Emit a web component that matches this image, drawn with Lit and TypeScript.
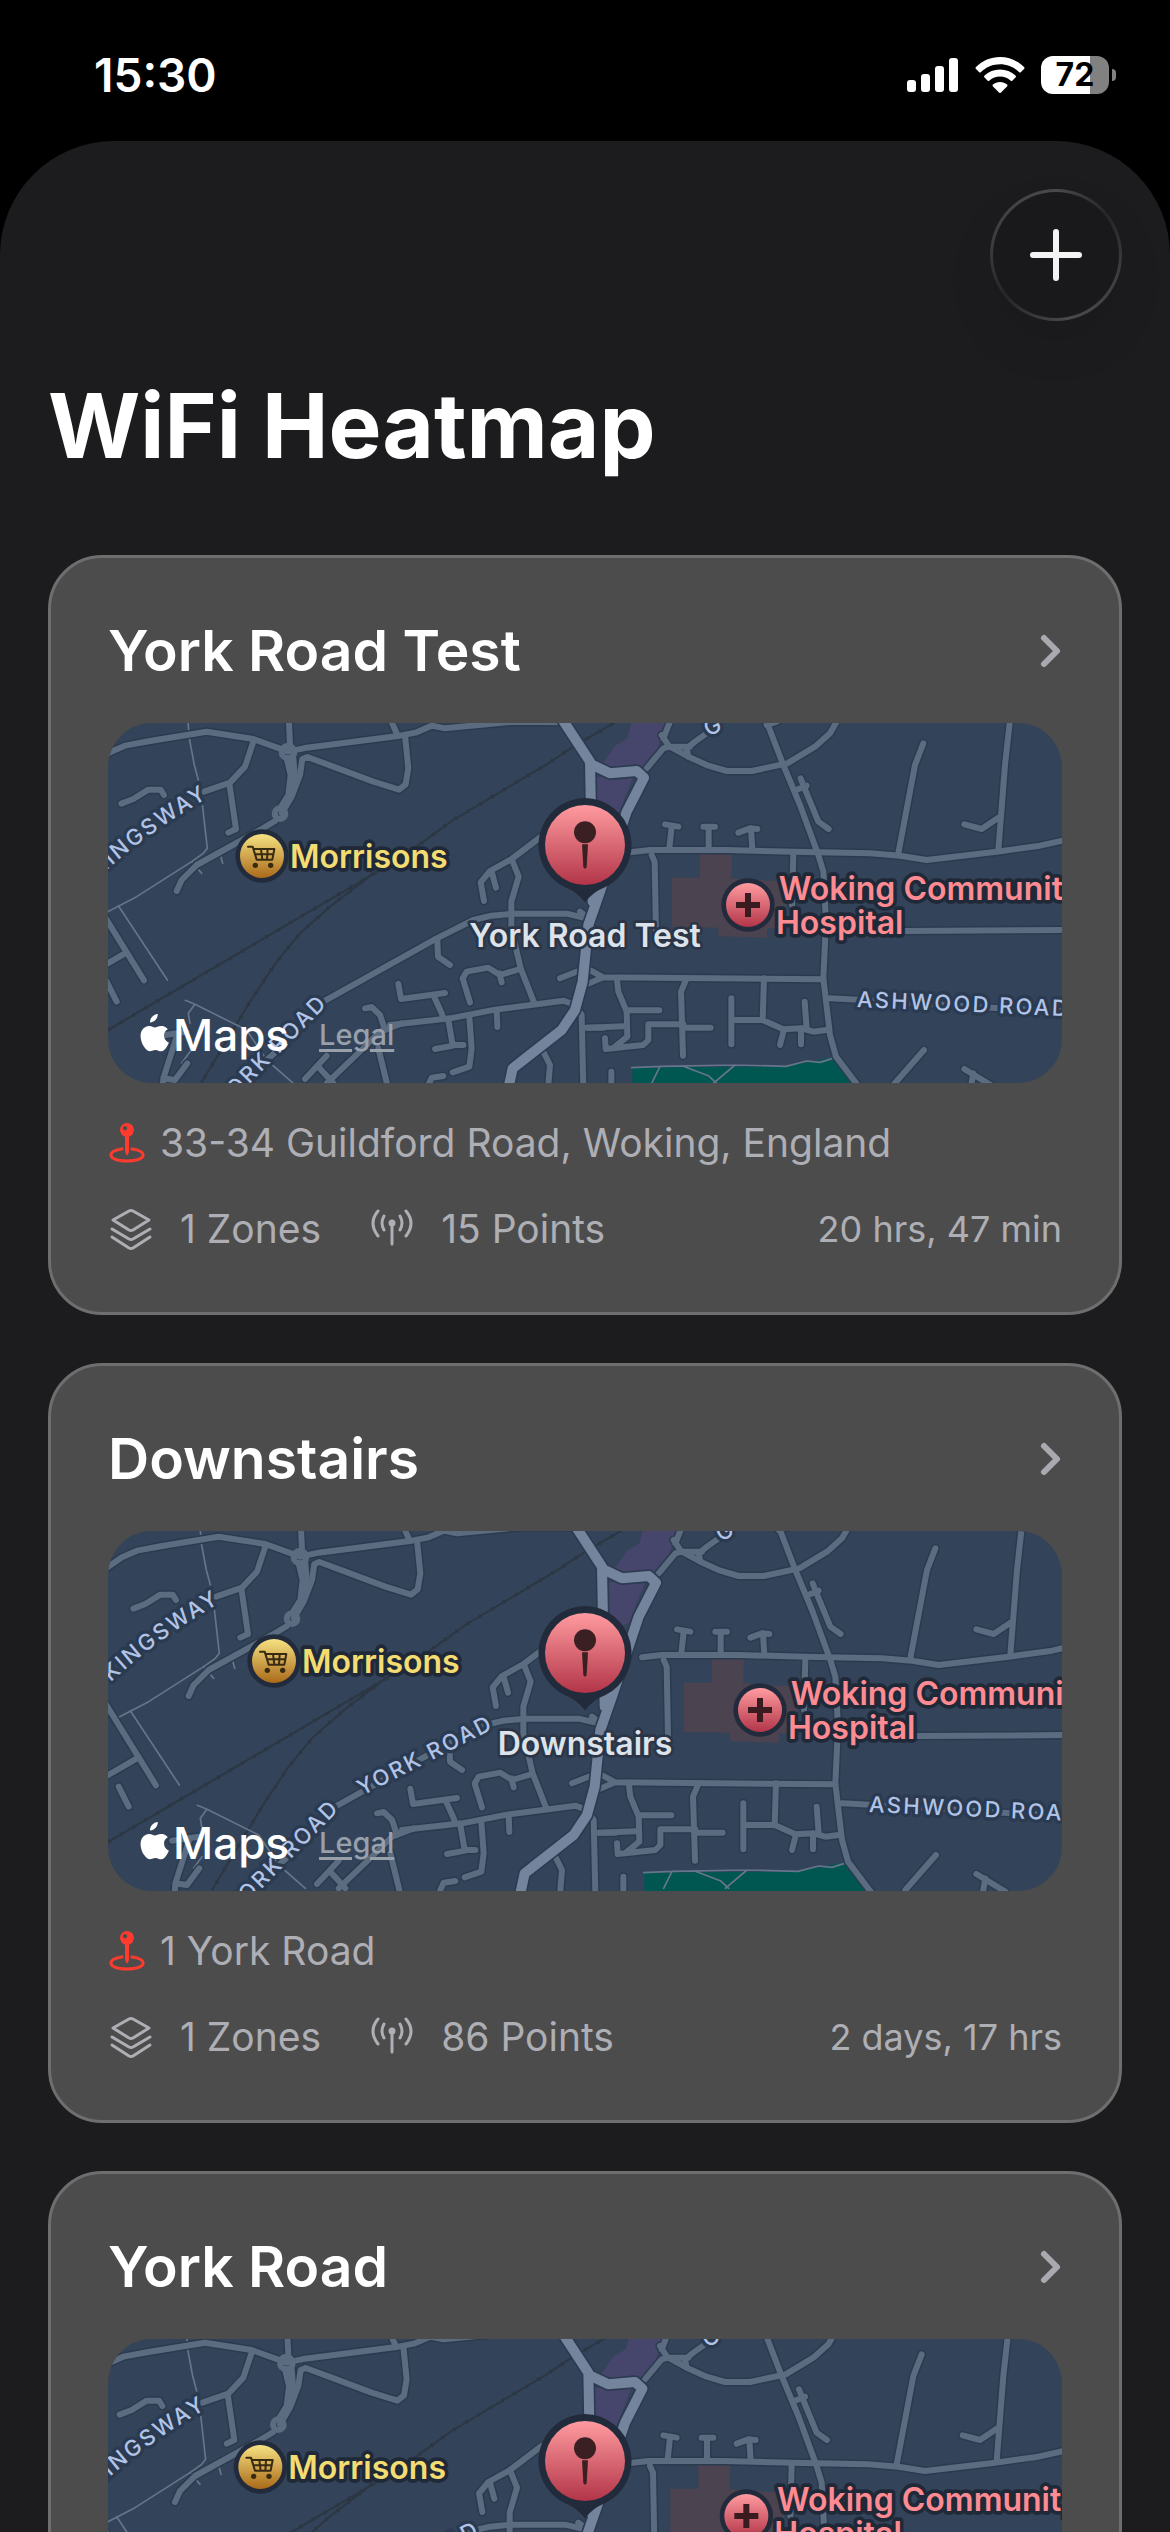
import { LitElement, html, svg, css } from "lit";
import { customElement, property } from "lit/decorators.js";

interface Survey {
  id: string;
  name: string;
  address: string;
  zones: number;
  points: number;
  age: string;
  dx: number;
  dy: number;
  streetLabel: boolean;
}

const SURVEYS: Survey[] = [
  { id: "s1", name: "York Road Test", address: "33-34 Guildford Road, Woking, England", zones: 1, points: 15, age: "20 hrs, 47 min", dx: 0, dy: 0, streetLabel: false },
  { id: "s2", name: "Downstairs", address: "1 York Road", zones: 1, points: 86, age: "2 days, 17 hrs", dx: 36, dy: -9, streetLabel: true },
  { id: "s3", name: "York Road", address: "1 York Road", zones: 1, points: 42, age: "3 days, 2 hrs", dx: -5, dy: -15, streetLabel: true },
];

/* Local streets, drawn thin over a darker casing. */
const STREETS = [
  "M-40 160 L30 112 L75 92 L150 78 L320 50 L460 72 L565 110 L620 98 L900 62 L950 52 L995 32 L1035 40 L1240 20 L1390 22",
  "M565 -20 L570 90 M870 10 L890 55 M915 62 L925 160 L917 208 L897 224 L820 200 L700 155 L622 126 L607 132 L600 180 L575 245 L545 295",
  "M560 130 L572 180 L565 240 L540 280 M580 130 L585 190 L570 245",
  "M460 80 L435 155 L390 203 L312 230 M388 205 L408 342 L385 353",
  "M64 266 L100 252 L145 224 L182 224 L192 240",
  "M525 318 L480 345 L290 450 L245 495 L230 528",
  "M-20 550 L132 796 M75 715 L-20 770 M20 800 L50 860",
  "M670 860 L1010 670 L1120 615 L1175 602 L1240 596 L1400 596 L1460 610",
  "M1330 360 L1235 432 L1170 468 L1142 502 L1152 558 M1175 470 L1188 518 M1235 432 L1256 485 L1234 560 L1234 640 L1262 760 L1302 862",
  "M1012 675 L1014 725 L1050 750 M1110 862 L1088 790 L1100 770 L1165 758 L1200 780 L1260 762 M1198 775 L1205 802",
  "M895 806 L903 852 L1035 834 M1000 840 L1025 895 L1030 910 M870 930 L1050 910 L1185 884 L1390 857 L1425 870 L1445 900 L1450 1120",
  "M795 880 L815 876 L840 900 L855 945 M1045 915 L1058 990 L1090 990 M1060 992 L1005 1002 M1108 905 L1115 1000 L1108 1055 L1058 1072 M1190 885 L1192 936",
  "M905 925 L840 950 L800 990 L680 1105 M680 1022 L615 1092 M655 1055 L700 1105 M835 1000 L862 1110 M985 1110 L995 1088 L1030 1083",
  "M230 965 L190 1090 L225 1095 L262 1045 M190 1090 L188 1120 M180 962 L260 950 M1325 1000 L1350 1050 L1345 1110 M1460 938 L1510 938",
  "M500 1035 L540 1000",
];

const STREETS_EAST = [
  "M150 412 L210 405 L440 405 L640 410 L870 415 L960 422 L1040 435 L1250 410 L1380 392 L1470 372",
  "M215 420 L224 440 L228 650 M255 328 L295 335 M275 335 L268 400 M370 335 L405 335 M386 335 L386 400 M475 353 L510 340 L532 342 M513 340 L517 405",
  "M560 20 L610 150 L660 270 L715 420 L730 470 L738 620 L730 790 L750 960 L768 1025 L840 1120",
  "M770 20 L750 55 L705 95 L622 145 L515 168 L440 168 L385 152 L325 125 L270 95 L250 100 L200 160 M245 60 L268 95 M270 20 L250 70 M560 30 L590 20",
  "M325 125 L320 100 L345 80 L380 55 M270 95 L330 95",
  "M662 190 L680 235 L715 320 L746 342 M648 225 L680 212",
  "M1030 85 L1005 150 L955 415 M1290 15 L1275 150 L1255 405 M1153 328 L1205 342 L1255 308",
  "M640 415 L636 570 M-60 790 L-10 770 M970 648 L1470 645 M750 850 L850 855 L1260 880 L1500 890",
  "M0 590 L20 605 M15 810 L70 787 L730 793 M70 787 L20 760 M110 787 L115 830 L140 890 L142 965 L105 995 M75 970 L77 1002 L190 990 L205 975 L205 928 L310 928 M140 886 L238 886 M22 938 L130 934",
  "M320 790 L303 830 L309 1022 M310 938 L392 938 M454 850 L454 988 M552 790 L548 914 M454 915 L548 915 L610 943 L665 940 L700 950 L745 944 M612 943 L600 990 M663 940 L663 988 M674 860 L680 940",
  "M94 1070 L94 1120 M1032 1005 L940 1110 M1153 1062 L1240 1115 M1180 1075 L1172 1120",
];

/* Main roads. */
const ARTERIES = [
  "M1385 10 L1470 140 L1478 560 M1478 150 L1530 175 L1610 168 L1632 188 L1580 290 L1500 530 L1465 630 L1448 800 L1425 885 L1385 945 L1270 1035 L1238 1060 L1225 1120",
];

const FOOTPATHS = [
  "M264 20 L268 70 L283 150 L295 195 M305 250 L322 400 L310 415 L275 440 L110 545 L20 592 M55 572 L202 795 M275 440 L305 475 M360 415 L368 445",
  "M256 856 L285 868 L440 945 L500 1035 L580 1105 M283 870 L265 895 L270 925 M270 1010 L245 1045",
  "M1595 1058 L1680 1054 L1905 1050 L2058 1054 L2120 1038 L2160 1042 L2205 1028 M1680 1054 L1655 1105 M1750 1054 L1825 1082 L1850 1105 M1905 1050 L1840 1105",
];

const RAILWAYS = [
  "M-10 965 L900 430 L1060 315 L1340 148 L1420 95 L1600 -10",
  "M820 475 L690 575 L600 655 L530 740 L450 860 L300 1110",
];

@customElement("survey-map")
export class SurveyMap extends LitElement {
  @property({ attribute: false }) survey!: Survey;

  static styles = css`
    :host { display: block; }
    .frame {
      position: relative;
      height: 360px;
      border-radius: 44px;
      overflow: hidden;
      background: #334359;
    }
    .canvas { display: block; width: 100%; height: 100%; }
    .casing, .street, .artery, .artery-casing, .path, .rail, .ties { fill: none; stroke-linecap: round; stroke-linejoin: round; }
    .casing { stroke: #2b3b4f; stroke-width: 27px; }
    .street { stroke: #5b6b80; stroke-width: 18px; }
    .artery-casing { stroke: #2c3b51; stroke-width: 40px; }
    .artery { stroke: #73849c; stroke-width: 30px; }
    .path { stroke: #67758a; stroke-width: 5px; }
    .rail { stroke: #2d3743; stroke-width: 6px; }
    .ties { stroke: #2d3743; stroke-width: 12px; stroke-linecap: butt; stroke-dasharray: 6 36; }
    .park { fill: #005752; }
    .plaza { fill: #46456b; }
    .clinic { fill: #4b4350; }
    .ring { fill: #222b3b; }
    .glyph { fill: #3a2022; }
    .bar { stroke: #3a1b20; stroke-width: 18px; }
    .cart { fill: none; stroke: #392b12; stroke-width: 6px; stroke-linejoin: round; stroke-linecap: round; }
    .wheel { fill: #392b12; }
    .label { font-family: Inter, "Liberation Sans", sans-serif; font-weight: 600; font-size: 96px; paint-order: stroke; stroke-linejoin: round; }
    .shop { fill: #f3dc72; stroke: #1f2938; stroke-width: 22px; }
    .hospital { fill: #ff8b92; stroke: #1f2938; stroke-width: 22px; }
    .place { fill: #dce3ea; stroke: #2b3547; stroke-width: 16px; text-anchor: middle; }
    .road { fill: #b1c3e6; stroke: #2a3a50; stroke-width: 20px; font-weight: 500; font-size: 66px; letter-spacing: 7px; }
    .trailing { text-anchor: end; }
    .attribution {
      position: absolute;
      left: 31px;
      bottom: 20px;
      display: flex;
      align-items: center;
      color: #fff;
      font-family: Inter, "Liberation Sans", sans-serif;
    }
    .apple { width: 30px; height: 38px; margin-bottom: 4px; fill: #fff; }
    .maps { font-size: 44px; line-height: 56px; margin-left: 4px; font-weight: 500; }
    .legal { margin-left: 30px; font-size: 29px; line-height: 40px; font-weight: 500; color: #98a0ab; text-underline-offset: 4px; text-decoration-thickness: 3px; }
  `;

  render() {
    const { name, dx, dy, streetLabel, id } = this.survey;
    return html`
      <div class="frame">
        <svg class="canvas" viewBox="24 24 2862 1080" preserveAspectRatio="xMidYMid slice" role="img" aria-label=${`Map of ${name}`}>
          <defs>
            <linearGradient id="red" x1="0" y1="0" x2="0" y2="1">
              <stop offset="0" stop-color="#ff9ba0"></stop>
              <stop offset="1" stop-color="#b23548"></stop>
            </linearGradient>
            <linearGradient id="gold" x1="0" y1="0" x2="0" y2="1">
              <stop offset="0" stop-color="#f6e282"></stop>
              <stop offset="1" stop-color="#aa6a19"></stop>
            </linearGradient>
            <path id="kingsway" d="M-180 640 L40 448 Q150 350 328 246"></path>
            <path id="york-low" d="M240 1320 L500 1054 L686 866"></path>
            <path id="york-high" d="M750 828 L1180 608"></path>
          </defs>
          <g transform="translate(${dx} ${dy})">
            <path class="plaza" d="M1600 0 L1582 70 L1545 92 L1505 150 L1560 175 L1620 165 L1670 110 L1705 0 Z M1490 185 L1600 185 L1550 310 L1520 320 L1490 290 Z"></path>
            <path class="clinic" d="M1800 414 L1896 418 L1894 490 L2058 500 L2058 640 L2002 640 L2000 668 L1856 664 L1854 638 L1716 636 L1716 488 L1800 488 Z"></path>
            <path class="park" d="M1597 1058 L2058 1054 L2205 1026 L2290 1130 L1597 1130 Z"></path>
            ${RAILWAYS.map((d) => svg`<path class="rail" d=${d}></path><path class="ties" d=${d}></path>`)}
            ${FOOTPATHS.map((d) => svg`<path class="path" d=${d}></path>`)}
            ${STREETS.map((d) => svg`<path class="casing" d=${d}></path>`)}
            <g transform="translate(1440 0)">${STREETS_EAST.map((d) => svg`<path class="casing" d=${d}></path>`)}</g>
            ${STREETS.map((d) => svg`<path class="street" d=${d}></path>`)}
            <g transform="translate(1440 0)">${STREETS_EAST.map((d) => svg`<path class="street" d=${d}></path>`)}</g>
            ${ARTERIES.map((d) => svg`<path class="artery-casing" d=${d}></path>`)}
            ${ARTERIES.map((d) => svg`<path class="artery" d=${d}></path>`)}
            <circle class="street" cx="564" cy="111" r="19"></circle>
            <circle class="street" cx="540" cy="296" r="16"></circle>
            <text class="label road trailing"><textPath href="#kingsway" startOffset="100%">KINGSWAY</textPath></text>
            <text class="label road trailing"><textPath href="#york-low" startOffset="100%">YORK ROAD</textPath></text>
            ${streetLabel ? svg`<text class="label road"><textPath href="#york-high">YORK ROAD</textPath></text>` : null}
            <text class="label road" transform="translate(2270 876) rotate(2.5)">ASHWOOD ROAD</text>
            <text class="label road" transform="translate(1826 66) rotate(-28)">G</text>
            <circle class="ring" cx="486" cy="423" r="80"></circle>
            <circle cx="486" cy="423" r="66" fill="url(#gold)"></circle>
            <path class="cart" d="M444 395 L458 395 L470 434 L517 434 L523 402 L461 402 M465 418 L520 418 M483 402 L487 434 M503 402 L501 434"></path>
            <circle class="wheel" cx="466" cy="451" r="8"></circle>
            <circle class="wheel" cx="512" cy="451" r="8"></circle>
            <text class="label shop" x="570" y="460">Morrisons</text>
            <circle class="ring" cx="1944" cy="570" r="80"></circle>
            <circle cx="1944" cy="570" r="66" fill="url(#red)"></circle>
            <path class="bar" d="M1908 570 H1980 M1944 534 V606"></path>
            <text class="label hospital" x="2036" y="555">Woking Community</text>
            <text class="label hospital" x="2028" y="656">Hospital</text>
          </g>
          <path class="ring" d="M1455 249 a141 141 0 0 1 60 268 Q1480 530 1455 562 Q1430 530 1395 517 a141 141 0 0 1 60 -268 Z"></path>
          <circle cx="1455" cy="390" r="120" fill="url(#red)"></circle>
          <circle class="glyph" cx="1455" cy="352" r="33"></circle>
          <path class="glyph" d="M1446 388 H1464 L1460 456 Q1455 466 1450 456 Z"></path>
          <text class="label place" x="1455" y="697">${name}</text>
        </svg>
        <div class="attribution">
          <svg class="apple" viewBox="4 1 26 34" preserveAspectRatio="none" aria-hidden="true">
            <path d="M20.3 1c.2 3.700-3 7.600-6.700 7.500C13.200 4.900 16.600 1.200 20.300 1ZM25.700 20.200c0-3.700 3-5.400 3.200-5.500-1.800-2.600-4.500-3-5.500-3-2.300-.200-4.500 1.400-5.700 1.400s-3-1.400-4.900-1.300c-2.500 0-4.900 1.500-6.200 3.700-2.600 4.600-.700 11.400 1.900 15.100 1.300 1.800 2.800 3.900 4.800 3.800 1.900-.1 2.600-1.200 4.900-1.200s3 1.200 5 1.200c2.100 0 3.400-1.900 4.600-3.700 1.500-2.100 2.100-4.100 2.100-4.200-.1-.1-4.200-1.600-4.200-6.300Z"></path>
          </svg>
          <span class="maps">Maps</span>
          <a class="legal" href="#legal-${id}">Legal</a>
        </div>
      </div>
    `;
  }
}

@customElement("survey-card")
export class SurveyCard extends LitElement {
  @property({ attribute: false }) survey!: Survey;

  static styles = css`
    :host { display: block; }
    .card {
      box-sizing: border-box;
      padding: 57px 57px 59px;
      border: 3px solid #6e6e6f;
      border-radius: 54px;
      background: #4c4c4c;
      color: #aeaeb5;
      font-family: Inter, "Liberation Sans", sans-serif;
    }
    .head { display: flex; align-items: center; justify-content: space-between; height: 72px; margin-bottom: 36px; color: inherit; text-decoration: none; }
    .name { margin: 0; color: #fff; font-size: 57px; line-height: 72px; font-weight: 600; }
    .chevron { width: 24px; height: 38px; fill: none; stroke: #a9a9b0; stroke-width: 6px; stroke-linecap: round; stroke-linejoin: round; }
    .address { display: flex; align-items: center; gap: 14px; margin-top: 36px; font-size: 39px; line-height: 48px; }
    .pin { width: 38px; height: 42px; }
    .meta { display: flex; align-items: center; margin-top: 38px; font-size: 39px; line-height: 48px; }
    .stat { display: flex; align-items: center; gap: 26px; margin-right: 48px; }
    .age { margin-left: auto; font-size: 36px; }
    .line { fill: none; stroke: #aeaeb5; stroke-width: 3px; stroke-linecap: round; stroke-linejoin: round; }
    .dot { fill: #aeaeb5; }
    .layers { width: 46px; height: 46px; }
    .antenna { width: 46px; height: 42px; }
  `;

  render() {
    const s = this.survey;
    return html`
      <article class="card">
        <a class="head" href="#${s.id}">
          <h2 class="name">${s.name}</h2>
          <svg class="chevron" viewBox="0 0 24 38" aria-hidden="true"><path d="M6 6 L19 19 L6 32"></path></svg>
        </a>
        <survey-map .survey=${s}></survey-map>
        <div class="address">
          <svg class="pin" viewBox="0 0 38 42" aria-hidden="true">
            <path fill="none" stroke="#ff3b30" stroke-width="3" stroke-linecap="round" d="M14 27 C-1 29 0 37 12 38.500 Q19 39.500 26 38.500 C38 37 39 29 24 27"></path>
            <path fill="#ff3b30" fill-rule="evenodd" d="M19 1 a7 7 0 0 1 2 13.700 V30 L19 34 L17 30 V14.700 A7 7 0 0 1 19 1 Z M17 4 a2.200 2.200 0 1 0 .1 0 Z"></path>
          </svg>
          <span>${s.address}</span>
        </div>
        <div class="meta">
          <span class="stat">
            <svg class="layers" viewBox="0 0 46 46" aria-hidden="true">
              <path class="line" d="M5 14 L21 5 Q23 4 25 5 L41 14 L25 24 Q23 25 21 24 Z M4 23 L21 33 Q23 34 25 33 L42 23 M4 31 L21 42 Q23 43 25 42 L42 31"></path>
            </svg>
            <span>${s.zones} Zones</span>
          </span>
          <span class="stat">
            <svg class="antenna" viewBox="0 0 46 42" aria-hidden="true">
              <circle class="dot" cx="23" cy="15" r="3.500"></circle>
              <path class="line" d="M23 16 V36 M15 8 Q11 15 15 22 M31 8 Q35 15 31 22 M9 3 Q-1 15 9 28 M37 3 Q47 15 37 28"></path>
            </svg>
            <span>${s.points} Points</span>
          </span>
          <span class="age">${s.age}</span>
        </div>
      </article>
    `;
  }
}

@customElement("app-root")
export class AppRoot extends LitElement {
  static styles = css`
    :host {
      display: block;
      height: 100vh;
      overflow: hidden;
      background: #000;
      color: #fff;
      font-family: Inter, "Liberation Sans", sans-serif;
    }
    .status { box-sizing: border-box; display: flex; align-items: center; justify-content: space-between; height: 141px; padding: 8px 54px 0 94px; }
    .time { font-size: 46px; line-height: 56px; font-weight: 600; }
    .indicators { display: flex; align-items: center; gap: 16px; }
    .signal { width: 52px; height: 36px; fill: #fff; }
    .wifi { width: 50px; height: 38px; fill: #fff; }
    .battery { display: flex; align-items: center; gap: 3px; }
    .cell { width: 68px; height: 38px; border-radius: 12px; background: linear-gradient(90deg, #fff 72%, #818181 72%); color: #000; font-size: 32px; line-height: 38px; font-weight: 700; text-align: center; }
    .cap { width: 4px; height: 12px; border-radius: 0 4px 4px 0; background: #818181; }
    .sheet { min-height: 100%; padding: 48px; box-sizing: border-box; border-radius: 114px 114px 0 0; background: #1c1c1e; }
    .toolbar { display: flex; justify-content: flex-end; }
    .add {
      display: flex;
      align-items: center;
      justify-content: center;
      width: 132px;
      height: 132px;
      padding: 0;
      border: 3px solid transparent;
      border-radius: 50%;
      background:
        linear-gradient(#19191b, #19191b) padding-box,
        conic-gradient(#4a4a4c, #262628 50deg, #3c3c3e 100deg, #4a4a4c 170deg, #262628 230deg, #3c3c3e 280deg, #4a4a4c) border-box;
      box-shadow: 0 24px 50px rgba(0, 0, 0, 0.08);
    }
    .plus { width: 54px; height: 54px; stroke: #f3f3f3; stroke-width: 6px; stroke-linecap: round; }
    .title { margin: 49px 0 0; font-size: 89px; line-height: 112px; font-weight: 700; }
    .list { display: grid; gap: 48px; margin-top: 73px; }
  `;

  render() {
    return html`
      <header class="status">
        <time class="time">15:30</time>
        <div class="indicators">
          <svg class="signal" viewBox="0 0 52 36" role="img" aria-label="Signal">
            <rect x="0" y="23" width="9" height="12" rx="3"></rect>
            <rect x="14" y="17" width="9" height="18" rx="3"></rect>
            <rect x="28" y="9" width="9" height="26" rx="3"></rect>
            <rect x="42" y="1" width="9" height="34" rx="3"></rect>
          </svg>
          <svg class="wifi" viewBox="0 0 50 38" role="img" aria-label="Wi-Fi">
            <path d="M25 1 C34 1 42.500 4.500 49 11 Q50 12 49 13 L46 16 Q45 17 44 16 C38.800 11 32 8.300 25 8.300 S11.200 11 6 16 Q5 17 4 16 L1 13 Q0 12 1 11 C7.500 4.500 16 1 25 1 Z"></path>
            <path d="M25 13.500 C31 13.500 36.300 15.700 40.500 19.500 Q41.500 20.500 40.500 21.500 L37.500 24.500 Q36.500 25.500 35.500 24.500 C32.600 22 29 20.600 25 20.600 S17.400 22 14.500 24.500 Q13.500 25.500 12.500 24.500 L9.500 21.500 Q8.500 20.500 9.500 19.500 C13.700 15.700 19 13.500 25 13.500 Z"></path>
            <path d="M25 26 C27.700 26 30.200 27 32 28.500 Q33 29.500 32 30.500 L26 36.500 Q25 37.500 24 36.500 L18 30.500 Q17 29.500 18 28.500 C19.800 27 22.300 26 25 26 Z"></path>
          </svg>
          <div class="battery"><span class="cell">72</span><span class="cap"></span></div>
        </div>
      </header>
      <main class="sheet">
        <div class="toolbar">
          <button class="add" type="button" aria-label="Add survey">
            <svg class="plus" viewBox="0 0 54 54" aria-hidden="true"><path d="M27 4 V50 M4 27 H50"></path></svg>
          </button>
        </div>
        <h1 class="title">WiFi Heatmap</h1>
        <section class="list">
          ${SURVEYS.map((s) => html`<survey-card .survey=${s}></survey-card>`)}
        </section>
      </main>
    `;
  }
}
